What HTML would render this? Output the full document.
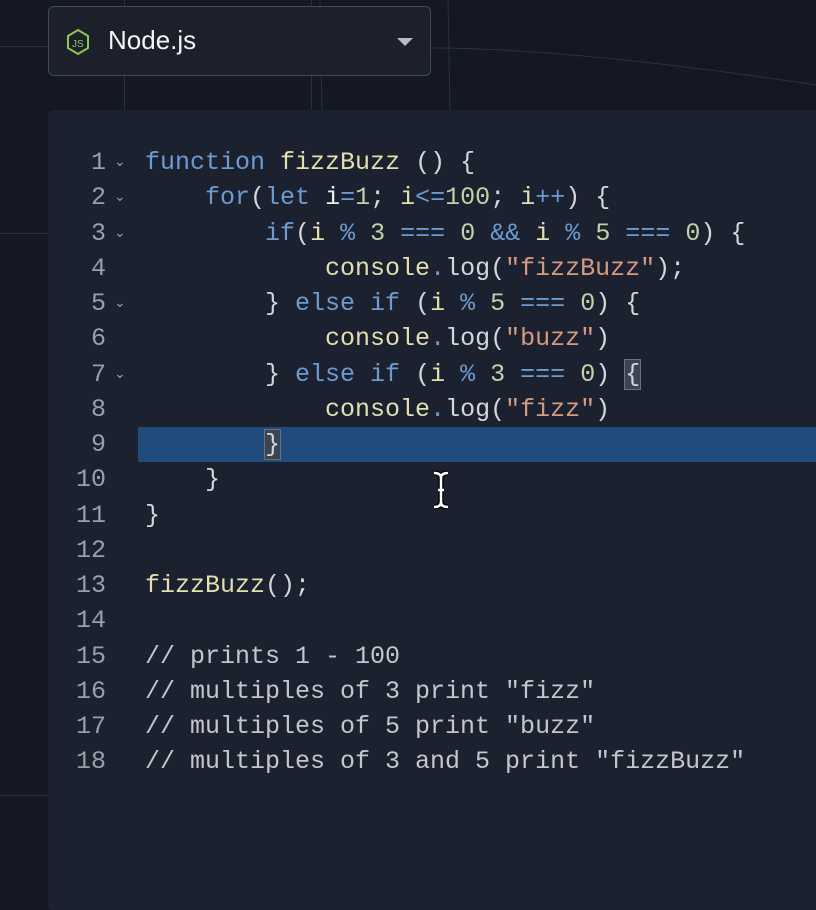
<!DOCTYPE html>
<html><head><style>
html,body{margin:0;padding:0;width:816px;height:895px;overflow:hidden;background:#131824;font-family:"Liberation Mono",monospace}
.grid{position:absolute;background:#2a3140}
.dd{position:absolute;left:48px;top:6px;width:381px;height:68px;border:1px solid #434a58;border-radius:6px;background:#1b202b}
.dd .t{position:absolute;left:59px;top:18px;font-family:"Liberation Sans",sans-serif;font-size:26px;color:#f2f4f7}
.dd .arr{position:absolute;left:348px;top:31px;width:0;height:0;border-left:8px solid transparent;border-right:8px solid transparent;border-top:8px solid #b8bcc4}
.panel{position:absolute;left:48px;top:110px;width:780px;height:800px;background:#1c2130;border-radius:5px}
.hl{position:absolute;left:138px;top:427px;width:690px;height:35px;background:#1f4c7c}
.code{position:absolute;left:0;top:145px;font-size:25px;line-height:35.25px;color:#d4d6dc}
.ln,.chev,.c{white-space:pre;top:0}
.ln{position:absolute;left:60px;width:46px;text-align:right;color:#9aa0aa}
.chev{position:absolute;left:114px;font-size:14px;color:#9aa0aa;font-family:"DejaVu Sans",sans-serif}
.c{position:absolute;left:145px}
.k{color:#6b9bd0}.f{color:#e2dfb0}.n{color:#bfd2a8}.s{color:#d29b82}.w{color:#f0f0f0}.o{color:#6b9bd0}.m{color:#c4c6cc}
.box{outline:1px solid #6a7280;background:#3a4452}
</style></head><body>
<div class="grid" style="left:124px;top:0;width:1px;height:110px"></div>
<div class="grid" style="left:311px;top:0;width:1px;height:110px"></div>
<div class="grid" style="left:0;top:46px;width:48px;height:1px"></div>
<div class="grid" style="left:0;top:233px;width:48px;height:1px"></div>
<div class="grid" style="left:0;top:795px;width:48px;height:1px"></div>
<svg style="position:absolute;left:0;top:0" width="816" height="110"><path d="M431 48 C520 48 650 60 816 85" stroke="#2a3140" fill="none"/><path d="M320 0 L322 110 M448 0 L450 110" stroke="#2a3140"/></svg>
<div class="dd">
<svg style="position:absolute;left:16px;top:21px" width="26" height="28" viewBox="0 0 26 28"><path d="M13 2 L23 8 L23 20 L13 26 L3 20 L3 8 Z" fill="none" stroke="#8cc84b" stroke-width="2"/><text x="7" y="19" font-size="10" fill="#8cc84b" font-family="Liberation Sans">JS</text></svg>
<div class="t">Node.js</div><div class="arr"></div></div>
<div class="panel"></div>
<div class="hl"></div>
<div class="code"><div class="ln">1
2
3
4
5
6
7
8
9
10
11
12
13
14
15
16
17
18</div><div class="chev">⌄
⌄
⌄

⌄

⌄</div><div class="c"><span class="k">function</span> <span class="f">fizzBuzz</span> () {
    <span class="k">for</span>(<span class="k">let</span> <span class="w">i</span><span class="o">=</span><span class="n">1</span>; <span class="f">i</span><span class="o">&lt;=</span><span class="n">100</span>; <span class="f">i</span><span class="o">++</span>) {
        <span class="k">if</span>(<span class="f">i</span> <span class="o">%</span> <span class="n">3</span> <span class="o">===</span> <span class="n">0</span> <span class="o">&amp;&amp;</span> <span class="f">i</span> <span class="o">%</span> <span class="n">5</span> <span class="o">===</span> <span class="n">0</span>) {
            <span class="f">console</span><span class="o">.</span>log(<span class="s">"fizzBuzz"</span>);
        } <span class="k">else if</span> (<span class="f">i</span> <span class="o">%</span> <span class="n">5</span> <span class="o">===</span> <span class="n">0</span>) {
            <span class="f">console</span><span class="o">.</span>log(<span class="s">"buzz"</span>)
        } <span class="k">else if</span> (<span class="f">i</span> <span class="o">%</span> <span class="n">3</span> <span class="o">===</span> <span class="n">0</span>) <span class="box">{</span>
            <span class="f">console</span><span class="o">.</span>log(<span class="s">"fizz"</span>)
        <span class="box">}</span>
    }
}

<span class="f">fizzBuzz</span>();

<span class="m">// prints 1 - 100
// multiples of 3 print "fizz"
// multiples of 5 print "buzz"
// multiples of 3 and 5 print "fizzBuzz"</span></div></div>
<svg style="position:absolute;left:431px;top:470px" width="20" height="40" viewBox="0 0 20 40"><path d="M3 3 Q10 3 10 8 Q10 3 17 3 M10 8 L10 32 M3 37 Q10 37 10 32 Q10 37 17 37 M7 20 L13 20" stroke="#000" stroke-width="5" fill="none"/><path d="M3 3 Q10 3 10 8 Q10 3 17 3 M10 8 L10 32 M3 37 Q10 37 10 32 Q10 37 17 37 M7 20 L13 20" stroke="#fff" stroke-width="2.5" fill="none"/></svg>
</body></html>
